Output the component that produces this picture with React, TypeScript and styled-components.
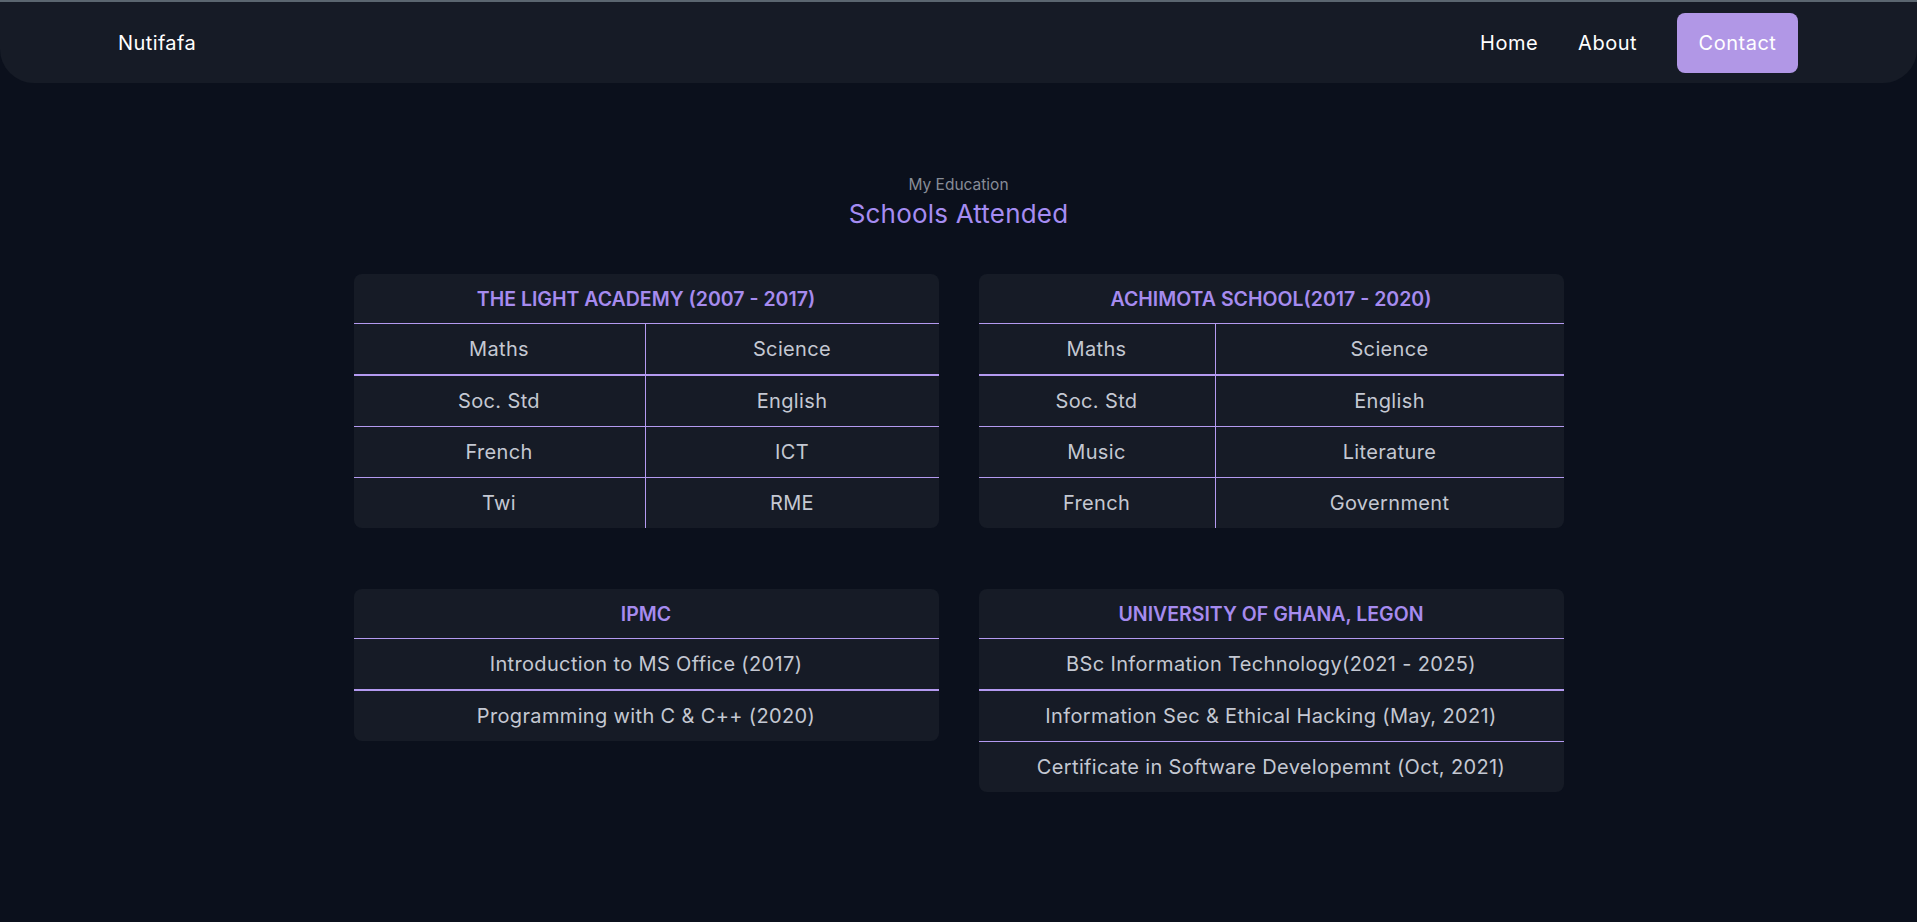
import React from "react";
import styled, { createGlobalStyle } from "styled-components";

const GlobalStyle = createGlobalStyle`
  html, body { margin: 0; padding: 0; }
  body {
    background: #0b101c;
    font-family: Inter, "Noto Sans", "Liberation Sans", sans-serif;
    color: #c4c8d2;
    min-height: 922px;
  }
`;

const TopLine = styled.div`
  height: 2px;
  background: #5b6670;
`;

const Nav = styled.nav`
  height: 81px;
  padding: 1px 119px 0 118px;
  background: #161b26;
  border-radius: 0 0 34px 34px;
  display: flex;
  align-items: center;
  justify-content: space-between;
  box-sizing: border-box;
`;

const Brand = styled.div`
  font-size: 20px;
  letter-spacing: 0.4px;
  color: #ffffff;
  font-weight: 400;
`;

const Links = styled.div`
  display: flex;
  align-items: center;
  gap: 40px;
`;

const NavLink = styled.a<{ $button?: boolean }>`
  font-size: 20px;
  letter-spacing: 0.5px;
  color: #ffffff;
  text-decoration: none;
  display: flex;
  align-items: center;
  justify-content: center;
  ${(p) =>
    p.$button
      ? `
    background: #b197e6;
    height: 60px;
    width: 121px;
    border-radius: 8px;
  `
      : ""}
`;

const Section = styled.section`
  padding-top: 92px;
  display: flex;
  flex-direction: column;
  align-items: center;
`;

const Eyebrow = styled.div`
  font-size: 15.5px;
  line-height: 20px;
  color: #878c97;
`;

const Title = styled.h2`
  margin: 3px 0 0;
  font-size: 26px;
  letter-spacing: 0.2px;
  line-height: 32px;
  font-weight: 400;
  color: #a58cf2;
`;

const Grid = styled.div`
  align-self: stretch;
  margin-top: 44px;
  display: grid;
  grid-template-columns: repeat(2, 585px);
  justify-content: center;
  column-gap: 40px;
  row-gap: 61px;
  align-items: start;
`;

const Card = styled.table`
  width: 585px;
  border-collapse: separate;
  border-spacing: 0;
  background: #161b26;
  border-radius: 8px;
  overflow: hidden;
  table-layout: fixed;
`;

const HeadCell = styled.th`
  height: 49px;
  padding: 0;
  border-bottom: 1px solid #b49af0;
  color: #a68bef;
  font-size: 19.5px;
  font-weight: 600;
  text-transform: uppercase;
  text-align: center;
`;

const Cell = styled.td<{ $thick?: boolean; $last?: boolean; $divider?: boolean }>`
  height: 50px;
  padding: 0;
  text-align: center;
  font-size: 20px;
  letter-spacing: 0.35px;
  color: #c4c8d2;
  border-bottom: ${(p) => (p.$last ? "none" : p.$thick ? "2px solid #b49af0" : "1px solid #b49af0")};
  border-right: ${(p) => (p.$divider ? "1px solid #b49af0" : "none")};
`;

type TableData = {
  title: string;
  firstCol?: string;
  rows: string[][];
};

const tables: TableData[] = [
  {
    title: "The Light Academy (2007 - 2017)",
    firstCol: "292px",
    rows: [
      ["Maths", "Science"],
      ["Soc. Std", "English"],
      ["French", "ICT"],
      ["Twi", "RME"],
    ],
  },
  {
    title: "Achimota School(2017 - 2020)",
    firstCol: "237px",
    rows: [
      ["Maths", "Science"],
      ["Soc. Std", "English"],
      ["Music", "Literature"],
      ["French", "Government"],
    ],
  },
  {
    title: "IPMC",
    rows: [["Introduction to MS Office (2017)"], ["Programming with C & C++ (2020)"]],
  },
  {
    title: "University of Ghana, Legon",
    rows: [
      ["BSc Information Technology(2021 - 2025)"],
      ["Information Sec & Ethical Hacking (May, 2021)"],
      ["Certificate in Software Developemnt (Oct, 2021)"],
    ],
  },
];

function SchoolTable({ data }: { data: TableData }) {
  const cols = data.rows[0].length;
  return (
    <Card>
      {cols > 1 && (
        <colgroup>
          <col style={{ width: data.firstCol }} />
          <col />
        </colgroup>
      )}
      <thead>
        <tr>
          <HeadCell colSpan={cols}>{data.title}</HeadCell>
        </tr>
      </thead>
      <tbody>
        {data.rows.map((row, i) => (
          <tr key={i}>
            {row.map((c, j) => (
              <Cell
                key={j}
                $thick={i === 0}
                $last={i === data.rows.length - 1}
                $divider={cols > 1 && j === 0}
              >
                {c}
              </Cell>
            ))}
          </tr>
        ))}
      </tbody>
    </Card>
  );
}

export default function App() {
  return (
    <>
      <GlobalStyle />
      <TopLine />
      <Nav>
        <Brand>Nutifafa</Brand>
        <Links>
          <NavLink href="#">Home</NavLink>
          <NavLink href="#">About</NavLink>
          <NavLink href="#" $button>
            Contact
          </NavLink>
        </Links>
      </Nav>
      <Section>
        <Eyebrow>My Education</Eyebrow>
        <Title>Schools Attended</Title>
        <Grid>
          {tables.map((t) => (
            <SchoolTable key={t.title} data={t} />
          ))}
        </Grid>
      </Section>
    </>
  );
}
